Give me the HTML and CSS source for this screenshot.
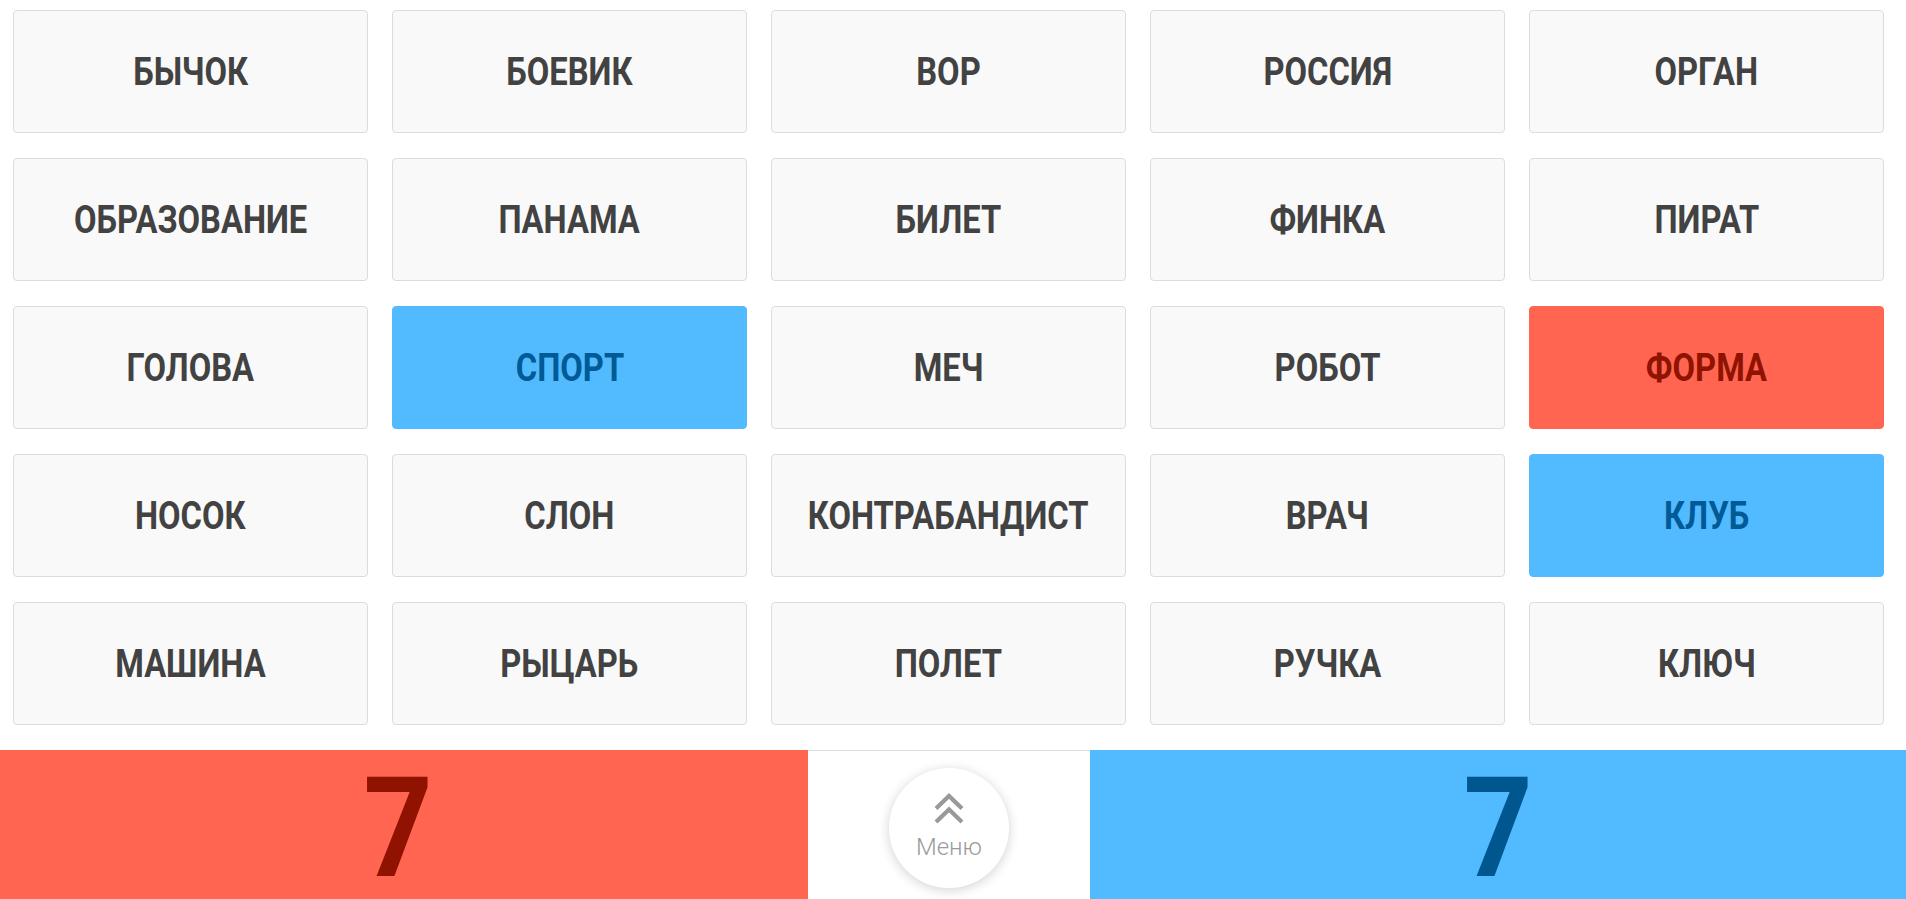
FILE: index.html
```html
<!DOCTYPE html>
<html lang="ru">
<head>
<meta charset="utf-8">
<title>Codenames</title>
<link rel="stylesheet" href="styles.css">
</head>
<body>
<main class="board">
  <div class="card"><span>Бычок</span></div>
  <div class="card"><span>Боевик</span></div>
  <div class="card"><span>Вор</span></div>
  <div class="card"><span>Россия</span></div>
  <div class="card"><span>Орган</span></div>
  <div class="card"><span>Образование</span></div>
  <div class="card"><span>Панама</span></div>
  <div class="card"><span>Билет</span></div>
  <div class="card"><span>Финка</span></div>
  <div class="card"><span>Пират</span></div>
  <div class="card"><span>Голова</span></div>
  <div class="card card-blue"><span>Спорт</span></div>
  <div class="card"><span>Меч</span></div>
  <div class="card"><span>Робот</span></div>
  <div class="card card-red"><span>Форма</span></div>
  <div class="card"><span>Носок</span></div>
  <div class="card"><span>Слон</span></div>
  <div class="card"><span>Контрабандист</span></div>
  <div class="card"><span>Врач</span></div>
  <div class="card card-blue"><span>Клуб</span></div>
  <div class="card"><span>Машина</span></div>
  <div class="card"><span>Рыцарь</span></div>
  <div class="card"><span>Полет</span></div>
  <div class="card"><span>Ручка</span></div>
  <div class="card"><span>Ключ</span></div>
</main>
<footer class="scorebar">
  <div class="score score-red"><span>7</span></div>
  <div class="middle">
    <button class="menu-btn" type="button">
      <svg class="chev" width="32" height="32" viewBox="0 0 32 32" aria-hidden="true">
        <path d="M3 15.5 L16 3 L29 15.5" fill="none" stroke="#999" stroke-width="4.2"/>
        <path d="M3 29 L16 16.5 L29 29" fill="none" stroke="#999" stroke-width="4.2"/>
      </svg>
      <span class="menu-label">Меню</span>
    </button>
  </div>
  <div class="score score-blue"><span>7</span></div>
</footer>
</body>
</html>
```
FILE: styles.css
```css
html, body {
  margin: 0;
  padding: 0;
  background: #fff;
  overflow: hidden;
}
body {
  width: 1906px;
  height: 899px;
  font-family: Roboto, "Liberation Sans", sans-serif;
}
.board {
  display: grid;
  grid-template-columns: repeat(5, 355px);
  grid-auto-rows: 123px;
  column-gap: 24px;
  row-gap: 25px;
  padding: 10px 22px 25px 13px;
}
.card {
  box-sizing: border-box;
  background: #f9f9f9;
  border: 1px solid #dcdcdc;
  border-radius: 4px;
  display: flex;
  align-items: center;
  justify-content: center;
  color: #424242;
  font-weight: 700;
  font-size: 38px;
  text-transform: uppercase;
}
.card span {
  display: inline-block;
  transform: scaleX(0.86);
  white-space: nowrap;
}
.card-blue {
  background: #52baff;
  border-color: #52baff;
  color: #005a96;
}
.card-red {
  background: #ff6550;
  border-color: #ff6550;
  color: #8f1300;
}
.scorebar {
  display: flex;
  height: 150px;
  overflow: hidden;
}
.score {
  box-sizing: border-box;
  height: 150px;
  padding-top: 6px;
  font-size: 140px;
  line-height: 144px;
  font-weight: 700;
  text-align: center;
}
.score span {
  display: inline-block;
  transform: scaleX(0.86);
}
.score-red {
  flex: 0 0 808px;
  background: #ff6550;
  color: #8f1300;
  padding-right: 12px;
}
.score-blue {
  flex: 1 1 auto;
  background: #52baff;
  color: #00578f;
}
.middle {
  flex: 0 0 282px;
  box-sizing: border-box;
  border-top: 1px solid #dedede;
  display: flex;
  justify-content: center;
  padding-top: 17px;
}
.menu-btn {
  width: 120px;
  height: 120px;
  border-radius: 50%;
  border: none;
  background: #fff;
  box-shadow: 0 2px 12px rgba(0, 0, 0, 0.18);
  display: flex;
  flex-direction: column;
  align-items: center;
  padding: 25px 0 0;
  margin: 0;
  cursor: pointer;
}
.chev {
  display: block;
}
.menu-label {
  margin-top: 9px;
  font-family: Roboto, "Liberation Sans", sans-serif;
  font-weight: 300;
  font-size: 24px;
  line-height: 26px;
  color: #9a9a9a;
}
```
